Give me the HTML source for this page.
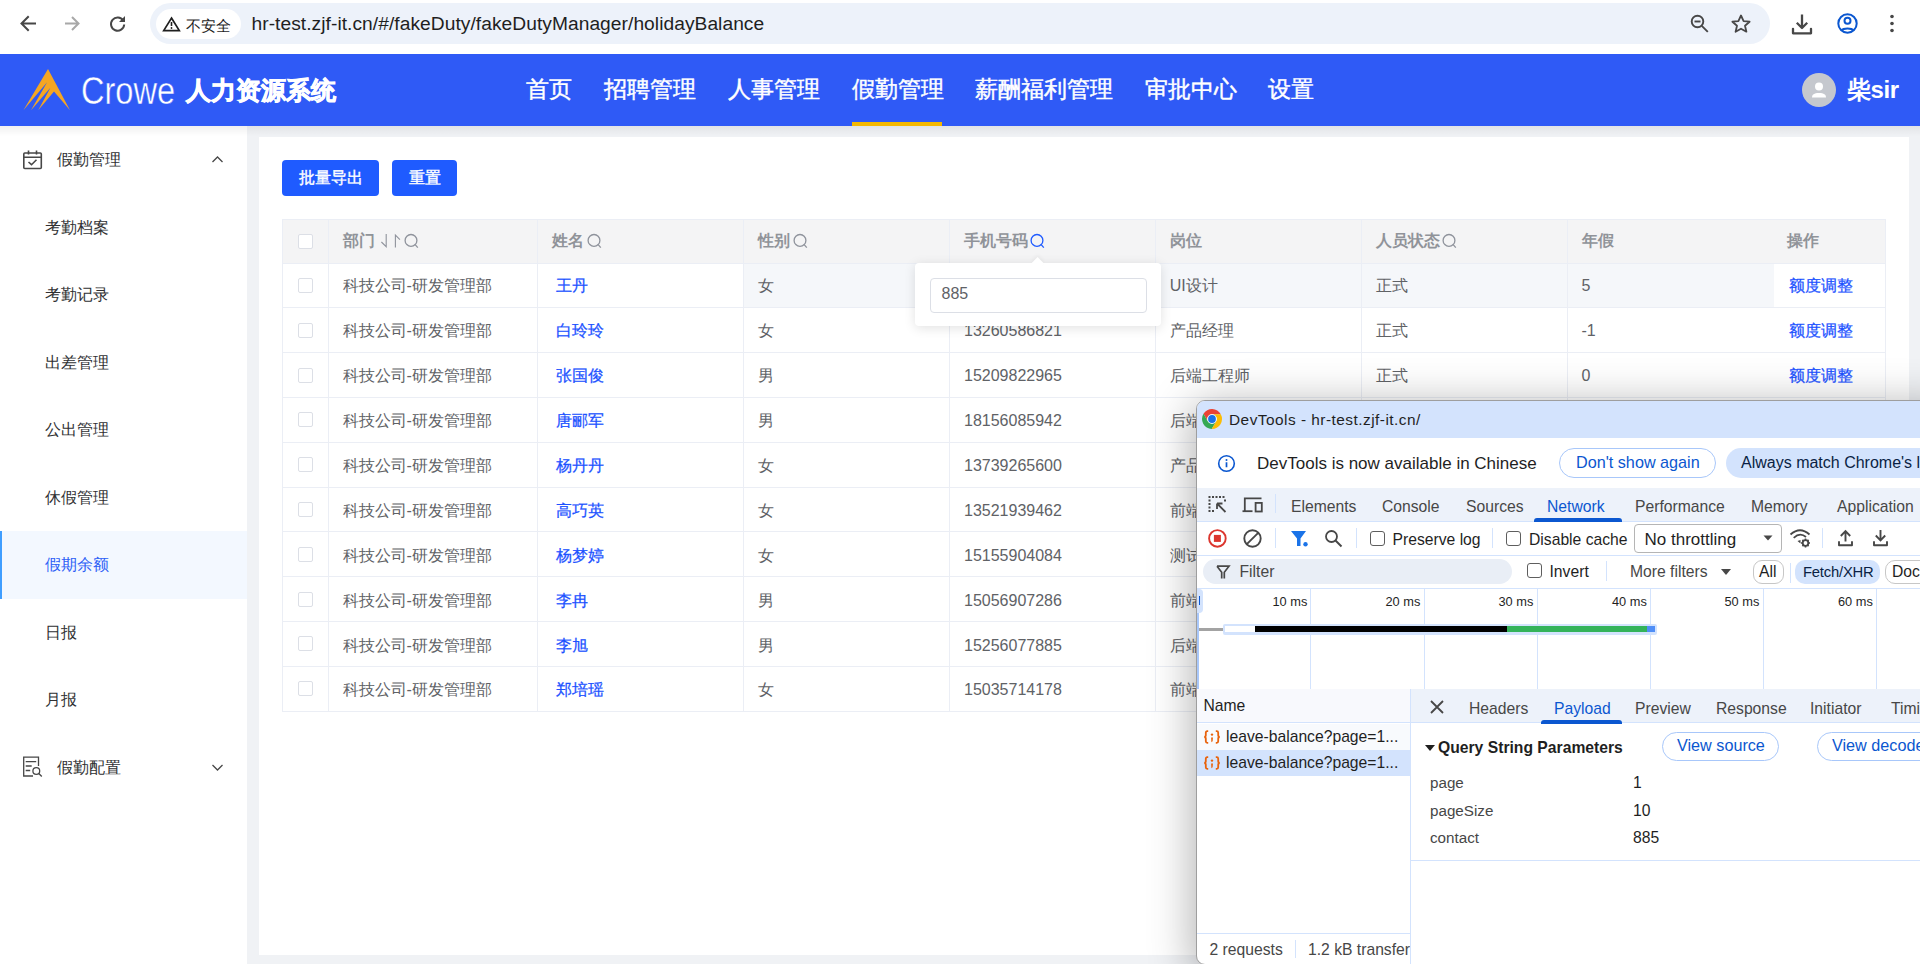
<!DOCTYPE html>
<html><head><meta charset="utf-8">
<style>
*{box-sizing:border-box;margin:0;padding:0}
html,body{width:1920px;height:964px;overflow:hidden;background:#f0f2f5;font-family:"Liberation Sans",sans-serif;position:relative}
.a{position:absolute;white-space:nowrap}
/* chrome toolbar */
#tb{position:absolute;left:0;top:0;width:1920px;height:54px;background:#fff}
#omni{position:absolute;left:150px;top:3px;width:1620px;height:41px;border-radius:21px;background:#edf2fa}
#chip{position:absolute;left:156px;top:9px;width:85px;height:30px;border-radius:15px;background:#fff}
/* header */
#hd{position:absolute;left:0;top:54px;width:1920px;height:72px;background:#2f5af6}
.nav{position:absolute;top:54px;height:72px;line-height:70px;color:#fff;font-size:23px;-webkit-text-stroke:.45px #fff;white-space:nowrap}
/* sidebar */
#sb{position:absolute;left:0;top:126px;width:247px;height:838px;background:#fff}
.si{position:absolute;left:45px;font-size:16px;color:#303133;white-space:nowrap;line-height:20px}
/* card */
#card{position:absolute;left:259px;top:137px;width:1650px;height:818px;background:#fff}
.btn{position:absolute;top:160px;height:36px;border-radius:4px;background:#1f5bff;color:#fff;font-size:16px;line-height:36px;text-align:center;-webkit-text-stroke:.4px #fff}
/* table */
#tbl{position:absolute;left:282px;top:219px;width:1604px;height:492px;border:1px solid #ebeef5;border-right:none;border-bottom:none}
.th{position:absolute;top:219px;height:45px;background:#f4f4f5;border-bottom:1px solid #ebeef5}
.tr{position:absolute;left:282px;width:1604px;height:45px;border-bottom:1px solid #ebeef5}
.vl{position:absolute;top:219px;width:1px;height:492px;background:#ebeef5}
.ht{position:absolute;top:231px;font-size:16px;font-weight:700;color:#909399;line-height:20px;white-space:nowrap}
.td{position:absolute;font-size:16px;color:#606266;line-height:20px;white-space:nowrap}
.lk{color:#1c52ff;-webkit-text-stroke:.25px #1c52ff}
.cb{position:absolute;left:298px;width:15px;height:15px;border:1px solid #dcdfe6;border-radius:2px;background:#fff}
/* devtools */
#dt{position:absolute;left:1197px;top:400px;width:740px;height:563px;background:#fff;border:1px solid #a9b3c4;border-radius:8px;overflow:hidden;box-shadow:-4px 0 10px rgba(0,0,0,.18)}
.dtx{position:absolute;white-space:nowrap;font-size:15.7px;line-height:18px;color:#474747}
</style></head><body>
<!-- ============ CHROME TOOLBAR ============ -->
<div id="tb"></div>
<svg class="a" style="left:0;top:0" width="150" height="54" viewBox="0 0 150 54">
  <g fill="none" stroke="#474747" stroke-width="2" stroke-linecap="square">
    <path d="M35 23.5H22M28 17l-6.5 6.5L28 30"/>
  </g>
  <g fill="none" stroke="#a8a8a8" stroke-width="2">
    <path d="M65 23.5h13M72 17l6.5 6.5L72 30"/>
  </g>
  <g fill="none" stroke="#474747" stroke-width="2">
    <path d="M123.2 20.6A6.6 6.6 0 1 0 124.2 24.5"/>
  </g>
  <path d="M125 16v6h-6z" fill="#474747"/>
</svg>
<div id="omni"></div>
<div id="chip"></div>
<svg class="a" style="left:162px;top:15px" width="19" height="17" viewBox="0 0 19 17"><path d="M9.5 3L17.3 15.6H1.7Z" fill="none" stroke="#1f1f1f" stroke-width="1.7" stroke-linejoin="miter"/><path d="M9.5 7v4" stroke="#1f1f1f" stroke-width="1.6"/><circle cx="9.5" cy="13" r=".9" fill="#1f1f1f"/></svg>
<div class="a" style="left:186px;top:15.5px;font-size:15px;line-height:20px;color:#1f1f1f">不安全</div>
<div class="a" style="left:251.5px;top:12.3px;font-size:19.2px;letter-spacing:.05px;line-height:24px;color:#1f1f1f">hr-test.zjf-it.cn/#/fakeDuty/fakeDutyManager/holidayBalance</div>
<svg class="a" style="left:1686px;top:10px" width="80" height="30" viewBox="0 0 80 30">
  <g fill="none" stroke="#474747" stroke-width="1.9"><circle cx="11.5" cy="11.5" r="5.8"/><path d="M15.8 15.8l6 6"/><path d="M8.5 11.5h6"/></g>
  <path d="M55 5.5l2.6 5.6 6 .6-4.6 4 1.4 6L55 18.7l-5.4 3 1.4-6-4.6-4 6-.6z" fill="none" stroke="#474747" stroke-width="1.8" stroke-linejoin="round"/>
</svg>
<svg class="a" style="left:1780px;top:8px" width="130" height="34" viewBox="0 0 130 34">
  <g fill="none" stroke="#474747" stroke-width="2.3" stroke-linejoin="round"><path d="M22 6.5V20M16.8 14.8L22 20L27.2 14.8"/><path d="M13 20.8V25.3H31V20.8" stroke-linecap="round"/></g>
  <g fill="none" stroke="#0b57d0" stroke-width="2"><circle cx="67.5" cy="15.5" r="9.2"/><circle cx="67.5" cy="12.8" r="3"/><path d="M61.5 22.5c2-2.6 10-2.6 12 0"/></g>
  <g fill="#474747"><circle cx="112" cy="8.5" r="1.8"/><circle cx="112" cy="15.5" r="1.8"/><circle cx="112" cy="22.5" r="1.8"/></g>
</svg>

<!-- ============ HEADER ============ -->
<div id="hd"></div>
<svg class="a" style="left:18px;top:64px" width="60" height="52" viewBox="18 64 60 52"><path d="M48 69 L70 110.3 L54 91.5 L38.2 110.3 L50.4 87.7 L31 110.3 L47.1 82.3 L23.4 110.3 Z" fill="#f5a623"/></svg>
<div class="a" style="left:80.5px;top:68px;font-size:38.5px;line-height:46px;color:#fff;transform:scaleX(0.846);transform-origin:0 0;-webkit-text-stroke:.45px #2f5af6">Crowe</div>
<div class="a" style="left:186px;top:75px;font-size:25px;line-height:30px;color:#fff;font-weight:900;-webkit-text-stroke:.8px #fff">人力资源系统</div>
<div class="nav" style="left:526px">首页</div>
<div class="nav" style="left:604px">招聘管理</div>
<div class="nav" style="left:728px">人事管理</div>
<div class="nav" style="left:852px">假勤管理</div>
<div class="a" style="left:852px;top:122px;width:90px;height:4px;background:#f5b800"></div>
<div class="nav" style="left:975px">薪酬福利管理</div>
<div class="nav" style="left:1145px">审批中心</div>
<div class="nav" style="left:1268px">设置</div>
<svg class="a" style="left:1802px;top:73px" width="34" height="34" viewBox="0 0 34 34"><circle cx="17" cy="17" r="17" fill="#c5c8ce"/><circle cx="17" cy="13.5" r="4" fill="#fff"/><path d="M10 24.5c0-3 2-4.5 7-4.5s7 1.5 7 4.5z" fill="#fff"/></svg>
<div class="a" style="left:1847px;top:75px;font-size:24px;line-height:30px;color:#fff;font-weight:700;letter-spacing:-.4px">柴sir</div>

<!-- ============ SIDEBAR ============ -->
<div id="sb"></div>
<div class="a" style="left:0;top:126px;width:1920px;height:10px;background:linear-gradient(rgba(0,0,0,.06),rgba(0,0,0,0))"></div>
<svg class="a" style="left:22px;top:149px" width="22" height="22" viewBox="0 0 22 22"><g fill="none" stroke="#474747" stroke-width="1.6"><rect x="1.8" y="4" width="17.5" height="15.5" rx="1"/><path d="M2 8.3h17M6.5 1.5v4M14.5 1.5v4M6.5 13l3 2.7 5-5"/></g></svg>
<div class="si" style="left:57px;top:150.2px">假勤管理</div>
<svg class="a" style="left:211px;top:155px" width="13" height="9" viewBox="0 0 13 9"><path d="M1.5 7l5-5 5 5" fill="none" stroke="#474747" stroke-width="1.3"/></svg>
<div class="si" style="top:218.2px">考勤档案</div>
<div class="si" style="top:285.2px">考勤记录</div>
<div class="si" style="top:353.2px">出差管理</div>
<div class="si" style="top:420.2px">公出管理</div>
<div class="si" style="top:488.2px">休假管理</div>
<div class="a" style="left:0;top:531px;width:247px;height:68px;background:#f3f8ff;border-left:2px solid #409eff"></div>
<div class="si" style="top:555.2px;color:#2c5ff6">假期余额</div>
<div class="si" style="top:623.2px">日报</div>
<div class="si" style="top:690.2px">月报</div>
<svg class="a" style="left:22px;top:755px" width="22" height="24" viewBox="0 0 22 24"><g fill="none" stroke="#474747" stroke-width="1.3"><path d="M16.5 11V2.2H1.7V21H11"/><path d="M3.7 6.6h10.5M3.7 11h6M3.7 15.5h4.5"/><circle cx="14.3" cy="16" r="3.4"/><path d="M16.8 18.5l3 3"/></g></svg>
<div class="si" style="left:57px;top:758.2px">假勤配置</div>
<svg class="a" style="left:211px;top:763px" width="13" height="9" viewBox="0 0 13 9"><path d="M1.5 2l5 5 5-5" fill="none" stroke="#474747" stroke-width="1.3"/></svg>

<!-- ============ CARD ============ -->
<div id="card"></div>
<div class="btn" style="left:282px;width:97px">批量导出</div>
<div class="btn" style="left:392px;width:65px">重置</div>
<div class="a" style="left:282px;top:219.2px;width:1604px;height:44.0px;background:#f4f4f5"></div>
<div class="a" style="left:743.4px;top:263.2px;width:1030.1999999999998px;height:44.78px;background:#f5f7fa"></div>
<div class="a" style="left:282px;top:262.70px;width:1604px;height:1px;background:#ebeef5"></div>
<div class="a" style="left:282px;top:307.48px;width:1604px;height:1px;background:#ebeef5"></div>
<div class="a" style="left:282px;top:352.26px;width:1604px;height:1px;background:#ebeef5"></div>
<div class="a" style="left:282px;top:397.04px;width:1604px;height:1px;background:#ebeef5"></div>
<div class="a" style="left:282px;top:441.82px;width:1604px;height:1px;background:#ebeef5"></div>
<div class="a" style="left:282px;top:486.60px;width:1604px;height:1px;background:#ebeef5"></div>
<div class="a" style="left:282px;top:531.38px;width:1604px;height:1px;background:#ebeef5"></div>
<div class="a" style="left:282px;top:576.16px;width:1604px;height:1px;background:#ebeef5"></div>
<div class="a" style="left:282px;top:620.94px;width:1604px;height:1px;background:#ebeef5"></div>
<div class="a" style="left:282px;top:665.72px;width:1604px;height:1px;background:#ebeef5"></div>
<div class="a" style="left:282px;top:710.50px;width:1604px;height:1px;background:#ebeef5"></div>
<div class="a" style="left:282px;top:218.7px;width:1604px;height:1px;background:#ebeef5"></div>
<div class="a" style="left:281.5px;top:219.2px;width:1px;height:491.8px;background:#ebeef5"></div>
<div class="a" style="left:327.5px;top:219.2px;width:1px;height:491.8px;background:#ebeef5"></div>
<div class="a" style="left:537.0px;top:219.2px;width:1px;height:491.8px;background:#ebeef5"></div>
<div class="a" style="left:742.9px;top:219.2px;width:1px;height:491.8px;background:#ebeef5"></div>
<div class="a" style="left:948.7px;top:219.2px;width:1px;height:491.8px;background:#ebeef5"></div>
<div class="a" style="left:1154.8px;top:219.2px;width:1px;height:491.8px;background:#ebeef5"></div>
<div class="a" style="left:1360.9px;top:219.2px;width:1px;height:491.8px;background:#ebeef5"></div>
<div class="a" style="left:1567.0px;top:219.2px;width:1px;height:491.8px;background:#ebeef5"></div>
<div class="a" style="left:1885.0px;top:219.2px;width:1px;height:491.8px;background:#ebeef5"></div>
<div class="cb" style="top:233.5px"></div>
<div class="ht" style="left:342.5px">部门</div>
<svg class="a" style="left:380px;top:233px" width="24" height="16" viewBox="380 233 24 16"><g fill="none" stroke="#8f939c" stroke-width="1.1"><path d="M386.2 234v12.6L381.4 242"/><path d="M395.4 247.6V235l4.5 4.6"/></g></svg>
<svg class="a" style="left:404.3px;top:233px" width="16" height="16" viewBox="0 0 16 16"><circle cx="7" cy="7.4" r="5.9" fill="none" stroke="#8f939c" stroke-width="1.3"/><path d="M11.2 11.6l2.6 3" stroke="#8f939c" stroke-width="1.3"/></svg>
<div class="ht" style="left:552px">姓名</div>
<svg class="a" style="left:587px;top:233px" width="16" height="16" viewBox="0 0 16 16"><circle cx="7" cy="7.4" r="5.9" fill="none" stroke="#8f939c" stroke-width="1.3"/><path d="M11.2 11.6l2.6 3" stroke="#8f939c" stroke-width="1.3"/></svg>
<div class="ht" style="left:758px">性别</div>
<svg class="a" style="left:793px;top:233px" width="16" height="16" viewBox="0 0 16 16"><circle cx="7" cy="7.4" r="5.9" fill="none" stroke="#8f939c" stroke-width="1.3"/><path d="M11.2 11.6l2.6 3" stroke="#8f939c" stroke-width="1.3"/></svg>
<div class="ht" style="left:964px">手机号码</div>
<svg class="a" style="left:1030px;top:233px" width="16" height="16" viewBox="0 0 16 16"><circle cx="7" cy="7.4" r="5.9" fill="none" stroke="#1f5bff" stroke-width="1.3"/><path d="M11.2 11.6l2.6 3" stroke="#1f5bff" stroke-width="1.3"/></svg>
<div class="ht" style="left:1169.8px">岗位</div>
<div class="ht" style="left:1375.8px">人员状态</div>
<svg class="a" style="left:1442px;top:233px" width="16" height="16" viewBox="0 0 16 16"><circle cx="7" cy="7.4" r="5.9" fill="none" stroke="#8f939c" stroke-width="1.3"/><path d="M11.2 11.6l2.6 3" stroke="#8f939c" stroke-width="1.3"/></svg>
<div class="ht" style="left:1581.5px">年假</div>
<div class="ht" style="left:1787px">操作</div>
<div class="cb" style="top:278.09px"></div>
<div class="td" style="left:342.5px;top:276.40px">科技公司-研发管理部</div>
<div class="td lk" style="left:555.6px;top:276.40px">王丹</div>
<div class="td" style="left:758px;top:276.40px">女</div>
<div class="td" style="left:964px;top:276.40px">13000000000</div>
<div class="td" style="left:1169.8px;top:276.40px">UI设计</div>
<div class="td" style="left:1375.8px;top:276.40px">正式</div>
<div class="td" style="left:1581.5px;top:276.40px">5</div>
<div class="td lk" style="left:1789.3px;top:276.40px">额度调整</div>
<div class="cb" style="top:322.87px"></div>
<div class="td" style="left:342.5px;top:321.29px">科技公司-研发管理部</div>
<div class="td lk" style="left:555.6px;top:321.29px">白玲玲</div>
<div class="td" style="left:758px;top:321.29px">女</div>
<div class="td" style="left:964px;top:321.29px">13260586821</div>
<div class="td" style="left:1169.8px;top:321.29px">产品经理</div>
<div class="td" style="left:1375.8px;top:321.29px">正式</div>
<div class="td" style="left:1581.5px;top:321.29px">-1</div>
<div class="td lk" style="left:1789.3px;top:321.29px">额度调整</div>
<div class="cb" style="top:367.65px"></div>
<div class="td" style="left:342.5px;top:366.18px">科技公司-研发管理部</div>
<div class="td lk" style="left:555.6px;top:366.18px">张国俊</div>
<div class="td" style="left:758px;top:366.18px">男</div>
<div class="td" style="left:964px;top:366.18px">15209822965</div>
<div class="td" style="left:1169.8px;top:366.18px">后端工程师</div>
<div class="td" style="left:1375.8px;top:366.18px">正式</div>
<div class="td" style="left:1581.5px;top:366.18px">0</div>
<div class="td lk" style="left:1789.3px;top:366.18px">额度调整</div>
<div class="cb" style="top:412.43px"></div>
<div class="td" style="left:342.5px;top:411.07px">科技公司-研发管理部</div>
<div class="td lk" style="left:555.6px;top:411.07px">唐郦军</div>
<div class="td" style="left:758px;top:411.07px">男</div>
<div class="td" style="left:964px;top:411.07px">18156085942</div>
<div class="td" style="left:1169.8px;top:411.07px">后端工程师</div>
<div class="td" style="left:1375.8px;top:411.07px">正式</div>
<div class="td" style="left:1581.5px;top:411.07px">0</div>
<div class="td lk" style="left:1789.3px;top:411.07px">额度调整</div>
<div class="cb" style="top:457.21px"></div>
<div class="td" style="left:342.5px;top:455.96px">科技公司-研发管理部</div>
<div class="td lk" style="left:555.6px;top:455.96px">杨丹丹</div>
<div class="td" style="left:758px;top:455.96px">女</div>
<div class="td" style="left:964px;top:455.96px">13739265600</div>
<div class="td" style="left:1169.8px;top:455.96px">产品经理</div>
<div class="td" style="left:1375.8px;top:455.96px">正式</div>
<div class="td" style="left:1581.5px;top:455.96px">0</div>
<div class="td lk" style="left:1789.3px;top:455.96px">额度调整</div>
<div class="cb" style="top:501.99px"></div>
<div class="td" style="left:342.5px;top:500.85px">科技公司-研发管理部</div>
<div class="td lk" style="left:555.6px;top:500.85px">高巧英</div>
<div class="td" style="left:758px;top:500.85px">女</div>
<div class="td" style="left:964px;top:500.85px">13521939462</div>
<div class="td" style="left:1169.8px;top:500.85px">前端工程师</div>
<div class="td" style="left:1375.8px;top:500.85px">正式</div>
<div class="td" style="left:1581.5px;top:500.85px">0</div>
<div class="td lk" style="left:1789.3px;top:500.85px">额度调整</div>
<div class="cb" style="top:546.77px"></div>
<div class="td" style="left:342.5px;top:545.74px">科技公司-研发管理部</div>
<div class="td lk" style="left:555.6px;top:545.74px">杨梦婷</div>
<div class="td" style="left:758px;top:545.74px">女</div>
<div class="td" style="left:964px;top:545.74px">15155904084</div>
<div class="td" style="left:1169.8px;top:545.74px">测试工程师</div>
<div class="td" style="left:1375.8px;top:545.74px">正式</div>
<div class="td" style="left:1581.5px;top:545.74px">0</div>
<div class="td lk" style="left:1789.3px;top:545.74px">额度调整</div>
<div class="cb" style="top:591.55px"></div>
<div class="td" style="left:342.5px;top:590.63px">科技公司-研发管理部</div>
<div class="td lk" style="left:555.6px;top:590.63px">李冉</div>
<div class="td" style="left:758px;top:590.63px">男</div>
<div class="td" style="left:964px;top:590.63px">15056907286</div>
<div class="td" style="left:1169.8px;top:590.63px">前端工程师</div>
<div class="td" style="left:1375.8px;top:590.63px">正式</div>
<div class="td" style="left:1581.5px;top:590.63px">0</div>
<div class="td lk" style="left:1789.3px;top:590.63px">额度调整</div>
<div class="cb" style="top:636.33px"></div>
<div class="td" style="left:342.5px;top:635.52px">科技公司-研发管理部</div>
<div class="td lk" style="left:555.6px;top:635.52px">李旭</div>
<div class="td" style="left:758px;top:635.52px">男</div>
<div class="td" style="left:964px;top:635.52px">15256077885</div>
<div class="td" style="left:1169.8px;top:635.52px">后端工程师</div>
<div class="td" style="left:1375.8px;top:635.52px">正式</div>
<div class="td" style="left:1581.5px;top:635.52px">0</div>
<div class="td lk" style="left:1789.3px;top:635.52px">额度调整</div>
<div class="cb" style="top:681.11px"></div>
<div class="td" style="left:342.5px;top:680.41px">科技公司-研发管理部</div>
<div class="td lk" style="left:555.6px;top:680.41px">郑培瑶</div>
<div class="td" style="left:758px;top:680.41px">女</div>
<div class="td" style="left:964px;top:680.41px">15035714178</div>
<div class="td" style="left:1169.8px;top:680.41px">前端工程师</div>
<div class="td" style="left:1375.8px;top:680.41px">正式</div>
<div class="td" style="left:1581.5px;top:680.41px">0</div>
<div class="td lk" style="left:1789.3px;top:680.41px">额度调整</div>
<div class="a" style="left:915px;top:263px;width:246px;height:63px;background:#fff;border-radius:4px;box-shadow:0 2px 12px rgba(0,0,0,.12)"></div>
<div class="a" style="left:1033px;top:258.9px;width:9.2px;height:9.2px;background:#fff;transform:rotate(45deg);box-shadow:-2px -2px 4px rgba(0,0,0,.04)"></div>
<div class="a" style="left:915px;top:266px;width:246px;height:10px;background:#fff"></div>
<div class="a" style="left:929.5px;top:277.5px;width:217px;height:35px;border:1px solid #dcdfe6;border-radius:4px;background:#fff"></div>
<div class="td" style="left:941.5px;top:284px">885</div>
<!-- ============ DEVTOOLS WINDOW ============ -->
<div id="dtw" class="a" style="left:1196px;top:400px;width:760px;height:564.5px;background:#fff;border:1px solid #9e9e9e;border-radius:9px 9px 9px 9px;overflow:hidden;box-shadow:0 8px 44px 4px rgba(0,0,0,.30)">
<div style="position:relative;left:-1197px;top:-401px;width:1940px;height:1000px">
  <!-- title bar -->
  <div class="a" style="left:1197px;top:400px;width:740px;height:38px;background:#d3e3fd"></div>
  <svg class="a" style="left:1202px;top:409px" width="20" height="20" viewBox="4 4 40 40">
    <path d="M41.6 14.5A20 20 0 0 0 7 13.51L15.77 28.75A9.5 9.5 0 0 1 24 14.5Z" fill="#ea4335"/>
    <path d="M7 13.51A20 20 0 0 0 23.43 43.99L32.23 28.75A9.5 9.5 0 0 1 15.77 28.75Z" fill="#34a853"/>
    <path d="M23.43 43.99A20 20 0 0 0 41.6 14.5L24 14.5A9.5 9.5 0 0 1 32.23 28.75Z" fill="#fbbc04"/>
    <circle cx="24" cy="24" r="9.5" fill="#fff"/>
    <circle cx="24" cy="24" r="7.8" fill="#1a73e8"/>
  </svg>
  <div class="dtx" style="left:1229px;top:410.5px;font-size:15.4px;letter-spacing:.48px;line-height:18px;color:#1f1f1f">DevTools - hr-test.zjf-it.cn/</div>

  <!-- info bar -->
  <svg class="a" style="left:1217px;top:454px" width="19" height="19" viewBox="0 0 19 19"><circle cx="9.5" cy="9.5" r="7.8" fill="none" stroke="#0b57d0" stroke-width="1.6"/><path d="M9.5 8.3v5" stroke="#0b57d0" stroke-width="1.7"/><circle cx="9.5" cy="5.9" r="1" fill="#0b57d0"/></svg>
  <div class="dtx" style="left:1257px;top:454px;font-size:17px;line-height:19px;color:#1f1f1f">DevTools is now available in Chinese</div>
  <div class="a" style="left:1559px;top:448px;width:157px;height:30px;border:1px solid #a8c7fa;border-radius:15px"></div>
  <div class="dtx" style="left:1576px;top:453px;font-size:16.2px;line-height:19px;color:#0b57d0">Don't show again</div>
  <div class="a" style="left:1726px;top:448px;width:260px;height:30px;background:#d3e3fd;border-radius:15px"></div>
  <div class="dtx" style="left:1741px;top:453px;font-size:16px;line-height:19px;color:#0a1f44">Always match Chrome's language</div>

  <!-- tab bar -->
  <div class="a" style="left:1197px;top:488px;width:740px;height:33.5px;background:#edf2fa;border-bottom:1px solid #d3e3fd"></div>
  <svg class="a" style="left:1207px;top:494px" width="60" height="22" viewBox="1207 494 60 22">
    <g fill="#474747">
      <rect x="1208.5" y="496" width="2" height="2"/><rect x="1212" y="496" width="2" height="2"/><rect x="1215.5" y="496" width="2" height="2"/><rect x="1219" y="496" width="2" height="2"/><rect x="1222.5" y="496" width="2" height="2"/>
      <rect x="1208.5" y="499.5" width="2" height="2"/><rect x="1208.5" y="503" width="2" height="2"/><rect x="1208.5" y="506.5" width="2" height="2"/><rect x="1208.5" y="510" width="2" height="2"/>
      <rect x="1212" y="510" width="2" height="2"/><rect x="1224" y="499.5" width="2" height="2"/>
    </g>
    <path d="M1217 503.5 L1225.5 512 M1217 503.5 h5.5 M1217 503.5 v5.5" stroke="#474747" stroke-width="1.8" fill="none"/>
    <g fill="none" stroke="#474747" stroke-width="1.8">
      <path d="M1261.5 498.3 H1244.8 V511.2"/><path d="M1242.5 511.2 H1252.5"/><rect x="1255.6" y="502.9" width="6.2" height="8.6"/>
    </g>
  </svg>
  <div class="a" style="left:1275px;top:494px;width:1px;height:19px;background:#d3e3fd"></div>
  <div class="dtx" style="left:1291px;top:497.5px">Elements</div>
  <div class="dtx" style="left:1382px;top:497.5px">Console</div>
  <div class="dtx" style="left:1466px;top:497.5px">Sources</div>
  <div class="dtx" style="left:1547px;top:497.5px;color:#0b57d0">Network</div>
  <div class="a" style="left:1534px;top:517.5px;width:88px;height:4px;background:#0b57d0;border-radius:3px 3px 0 0"></div>
  <div class="dtx" style="left:1635px;top:497.5px">Performance</div>
  <div class="dtx" style="left:1751px;top:497.5px">Memory</div>
  <div class="dtx" style="left:1837px;top:497.5px">Application</div>

  <!-- toolbar -->
  <div class="a" style="left:1197px;top:554.5px;width:740px;height:1px;background:#d3e3fd"></div>
  <svg class="a" style="left:1205px;top:526px" width="150" height="25" viewBox="1205 526 150 25">
    <circle cx="1217.4" cy="538.4" r="8.3" fill="none" stroke="#dc362e" stroke-width="1.9"/>
    <rect x="1213.9" y="534.9" width="7" height="7" fill="#dc362e"/>
    <circle cx="1252.5" cy="538.5" r="8.2" fill="none" stroke="#474747" stroke-width="1.9"/>
    <path d="M1246.8 544.2 L1258.2 532.8" stroke="#474747" stroke-width="1.9"/>
    <path d="M1291 531 H1306 L1300.5 538.5 V546 H1297 V538.5 Z" fill="#1a73e8"/>
    <circle cx="1305.5" cy="544.3" r="2.2" fill="#1a73e8"/>
    <circle cx="1331.5" cy="536.5" r="5.5" fill="none" stroke="#474747" stroke-width="1.8"/>
    <path d="M1335.5 540.5 L1341.5 546.5" stroke="#474747" stroke-width="1.9"/>
  </svg>
  <div class="a" style="left:1275px;top:528px;width:1px;height:20px;background:#d3e3fd"></div>
  <div class="a" style="left:1356px;top:528px;width:1px;height:20px;background:#d3e3fd"></div>
  <div class="a" style="left:1370px;top:531.3px;width:15px;height:14.5px;border:1.5px solid #5e5e5e;border-radius:3px"></div>
  <div class="dtx" style="left:1392.5px;top:530.5px;color:#1f1f1f">Preserve log</div>
  <div class="a" style="left:1492px;top:528px;width:1px;height:20px;background:#d3e3fd"></div>
  <div class="a" style="left:1506px;top:531.3px;width:15px;height:14.5px;border:1.5px solid #5e5e5e;border-radius:3px"></div>
  <div class="dtx" style="left:1529px;top:530.5px;color:#1f1f1f">Disable cache</div>
  <div class="a" style="left:1633.5px;top:524px;width:148px;height:28.5px;border:1px solid #b5b5b5;border-radius:4px"></div>
  <div class="dtx" style="left:1644.5px;top:530px;font-size:17px;line-height:20px;color:#1f1f1f">No throttling</div>
  <svg class="a" style="left:1762px;top:534px" width="12" height="8" viewBox="0 0 12 8"><path d="M1.5 1.5h9L6 6.5z" fill="#474747"/></svg>
  <svg class="a" style="left:1788px;top:528px" width="105" height="22" viewBox="1788 528 105 22">
    <g fill="none" stroke="#474747" stroke-width="1.8">
      <path d="M1790.5 534.5 Q1800 526 1809.5 534.5"/>
      <path d="M1793.7 537.8 Q1800 532 1806 537"/>
    </g>
    <path d="M1797.5 541 l3 -1 v3.5z" fill="#474747"/>
    <circle cx="1805.5" cy="543" r="2.8" fill="none" stroke="#474747" stroke-width="1.8"/>
    <g stroke="#474747" stroke-width="1.6"><path d="M1805.5 538.5v2M1805.5 545.5v2M1801 543h2M1808 543h2M1802.4 539.9l1.4 1.4M1807.2 544.7l1.4 1.4M1802.4 546.1l1.4-1.4M1807.2 541.3l1.4-1.4"/></g>
    <g fill="none" stroke="#474747" stroke-width="1.9">
      <path d="M1845.5 541.5 V531.2 M1840.8 536 L1845.5 531.2 L1850.2 536"/>
      <path d="M1839 542 V545.3 H1852 V542" stroke-linejoin="round" stroke-linecap="round"/>
      <path d="M1880.5 530 V540.3 M1875.8 535.5 L1880.5 540.3 L1885.2 535.5"/>
      <path d="M1874 542 V545.3 H1887 V542" stroke-linejoin="round" stroke-linecap="round"/>
    </g>
  </svg>
  <div class="a" style="left:1822px;top:528px;width:1px;height:20px;background:#d3e3fd"></div>

  <!-- filter bar -->
  <div class="a" style="left:1197px;top:588px;width:740px;height:1px;background:#d3e3fd"></div>
  <div class="a" style="left:1203px;top:559px;width:308.5px;height:25px;background:#e9eef6;border-radius:12.5px"></div>
  <svg class="a" style="left:1215px;top:564px" width="16" height="16" viewBox="0 0 16 16"><path d="M2 2.2h12L9.3 8.2V14.5M2 2.2L6.7 8.2V14.5" fill="none" stroke="#474747" stroke-width="1.7"/></svg>
  <div class="dtx" style="left:1239.5px;top:562.8px;color:#474747">Filter</div>
  <div class="a" style="left:1527px;top:563.3px;width:15px;height:14.5px;border:1.5px solid #5e5e5e;border-radius:3px"></div>
  <div class="dtx" style="left:1549.5px;top:562.8px;color:#1f1f1f">Invert</div>
  <div class="a" style="left:1606px;top:561px;width:1px;height:20px;background:#d3e3fd"></div>
  <div class="dtx" style="left:1630px;top:562.8px;color:#474747">More filters</div>
  <svg class="a" style="left:1719px;top:567px" width="14" height="10" viewBox="0 0 14 10"><path d="M2 2h10L7 8z" fill="#474747"/></svg>
  <div class="a" style="left:1752.5px;top:560.3px;width:31px;height:23.5px;border:1px solid #c7c7c7;border-radius:9px"></div>
  <div class="dtx" style="left:1759px;top:562.8px;color:#1f1f1f">All</div>
  <div class="a" style="left:1789.5px;top:562.8px;width:1px;height:20px;background:#d3e3fd"></div>
  <div class="a" style="left:1795px;top:560.3px;width:85px;height:23.5px;background:#d3e3fd;border-radius:10px"></div>
  <div class="dtx" style="left:1803px;top:562.8px;color:#0a1f44;letter-spacing:-.2px;font-size:14.8px">Fetch/XHR</div>
  <div class="a" style="left:1885px;top:560.3px;width:60px;height:23.5px;border:1px solid #c7c7c7;border-radius:10px"></div>
  <div class="dtx" style="left:1892px;top:562.8px;color:#1f1f1f">Doc</div>

  <!-- timeline overview -->
  <div class="a" style="left:1197px;top:688.5px;width:740px;height:1px;background:#d3e3fd"></div>
  <div class="a" style="left:1310px;top:589px;width:1px;height:100px;background:#d3e3fd"></div>
  <div class="a" style="left:1423.5px;top:589px;width:1px;height:100px;background:#d3e3fd"></div>
  <div class="a" style="left:1536.5px;top:589px;width:1px;height:100px;background:#d3e3fd"></div>
  <div class="a" style="left:1650px;top:589px;width:1px;height:100px;background:#d3e3fd"></div>
  <div class="a" style="left:1762.5px;top:589px;width:1px;height:100px;background:#d3e3fd"></div>
  <div class="a" style="left:1876px;top:589px;width:1px;height:100px;background:#d3e3fd"></div>
  <div class="dtx" style="left:1272.5px;top:594px;font-size:12.8px;line-height:15px;color:#1f1f1f">10 ms</div>
  <div class="dtx" style="left:1385.5px;top:594px;font-size:12.8px;line-height:15px;color:#1f1f1f">20 ms</div>
  <div class="dtx" style="left:1498.5px;top:594px;font-size:12.8px;line-height:15px;color:#1f1f1f">30 ms</div>
  <div class="dtx" style="left:1612px;top:594px;font-size:12.8px;line-height:15px;color:#1f1f1f">40 ms</div>
  <div class="dtx" style="left:1724.5px;top:594px;font-size:12.8px;line-height:15px;color:#1f1f1f">50 ms</div>
  <div class="dtx" style="left:1838px;top:594px;font-size:12.8px;line-height:15px;color:#1f1f1f">60 ms</div>
  <div class="a" style="left:1197px;top:589px;width:2px;height:100px;background:#a8c7fa"></div><div class="a" style="left:1197px;top:589px;width:6px;height:23.5px;border-radius:0 4px 4px 0;background:#d3e3fd"></div><div class="a" style="left:1198.5px;top:596px;width:1.2px;height:9px;background:#0b57d0"></div>
  <div class="a" style="left:1199px;top:628px;width:24px;height:3px;background:#a3a3a3"></div>
  <div class="a" style="left:1223px;top:623.5px;width:434px;height:11px;background:#d3e3fd;border-radius:2px"></div>
  <div class="a" style="left:1225px;top:625.5px;width:30px;height:6px;background:#fff"></div>
  <div class="a" style="left:1255px;top:625.5px;width:252px;height:6px;background:#000"></div>
  <div class="a" style="left:1507px;top:625.5px;width:139.5px;height:6px;background:#34b35a"></div>
  <div class="a" style="left:1646.5px;top:625.5px;width:8px;height:6px;background:#4f8ef7"></div>

  <!-- split: left name panel -->
  <div class="a" style="left:1197px;top:689px;width:213.5px;height:34px;background:#f8f9fd;border-bottom:1px solid #d3e3fd"></div>
  <div class="dtx" style="left:1203.5px;top:697px;color:#1f1f1f">Name</div>
  <div class="a" style="left:1197px;top:724px;width:213.5px;height:26px;background:#f8fafd"></div><div class="a" style="left:1197px;top:750px;width:213.5px;height:25.7px;background:#d3e3fd"></div>
  <svg class="a" style="left:1203px;top:730px" width="18" height="14" viewBox="0 0 18 14"><g fill="none" stroke="#e8620c" stroke-width="1.8"><path d="M5.2 1.2H4.3Q2.8 1.2 2.8 2.7V5.3Q2.8 7 1.2 7Q2.8 7 2.8 8.7V11.3Q2.8 12.8 4.3 12.8H5.2"/><path d="M12.8 1.2H13.7Q15.2 1.2 15.2 2.7V5.3Q15.2 7 16.8 7Q15.2 7 15.2 8.7V11.3Q15.2 12.8 13.7 12.8H12.8"/></g><circle cx="9" cy="4.6" r="1.2" fill="#e8620c"/><path d="M8.1 7.6h1.9l-.4 3.6-1.2 1z" fill="#e8620c"/></svg><svg class="a" style="left:1203px;top:756px" width="18" height="14" viewBox="0 0 18 14"><g fill="none" stroke="#e8620c" stroke-width="1.8"><path d="M5.2 1.2H4.3Q2.8 1.2 2.8 2.7V5.3Q2.8 7 1.2 7Q2.8 7 2.8 8.7V11.3Q2.8 12.8 4.3 12.8H5.2"/><path d="M12.8 1.2H13.7Q15.2 1.2 15.2 2.7V5.3Q15.2 7 16.8 7Q15.2 7 15.2 8.7V11.3Q15.2 12.8 13.7 12.8H12.8"/></g><circle cx="9" cy="4.6" r="1.2" fill="#e8620c"/><path d="M8.1 7.6h1.9l-.4 3.6-1.2 1z" fill="#e8620c"/></svg>
  <div class="dtx" style="left:1226px;top:728px;color:#1f1f1f">leave-balance?page=1...</div>
  <div class="dtx" style="left:1226px;top:754px;color:#1f1f1f">leave-balance?page=1...</div>
  <div class="a" style="left:1410px;top:689px;width:1px;height:280px;background:#d3e3fd"></div>
  <div class="a" style="left:1197px;top:933px;width:213.5px;height:1px;background:#d3e3fd"></div>
  <div class="dtx" style="left:1209.5px;top:941px;color:#474747">2 requests</div>
  <div class="a" style="left:1295px;top:940px;width:1px;height:18px;background:#d3e3fd"></div>
  <div class="dtx" style="left:1308px;top:941px;color:#474747">1.2 kB transferred</div>
  <div class="a" style="left:1410px;top:689px;width:1px;height:280px;background:#d3e3fd"></div>

  <!-- right detail panel -->
  <div class="a" style="left:1411px;top:689px;width:530px;height:34px;background:#edf2fa;border-bottom:1px solid #d3e3fd"></div>
  <div class="a" style="left:1411px;top:723px;width:530px;height:240px;background:#fff"></div>
  <svg class="a" style="left:1429px;top:699px" width="16" height="16" viewBox="0 0 16 16"><path d="M2 2L14 14M14 2L2 14" stroke="#474747" stroke-width="1.8"/></svg>
  <div class="dtx" style="left:1469px;top:699.5px">Headers</div>
  <div class="dtx" style="left:1554px;top:699.5px;color:#0b57d0">Payload</div>
  <div class="a" style="left:1541px;top:719.5px;width:81px;height:4px;background:#0b57d0;border-radius:3px 3px 0 0"></div>
  <div class="dtx" style="left:1635px;top:699.5px">Preview</div>
  <div class="dtx" style="left:1716px;top:699.5px">Response</div>
  <div class="dtx" style="left:1810px;top:699.5px">Initiator</div>
  <div class="dtx" style="left:1891px;top:699.5px">Timing</div>

  <svg class="a" style="left:1424px;top:743px" width="12" height="10" viewBox="0 0 12 10"><path d="M1 2h10L6 8z" fill="#1f1f1f"/></svg>
  <div class="dtx" style="left:1438px;top:738.5px;font-weight:700;color:#1f1f1f">Query String Parameters</div>
  <div class="a" style="left:1661.5px;top:731.5px;width:117px;height:29px;border:1px solid #a8c7fa;border-radius:15px"></div>
  <div class="dtx" style="left:1677px;top:736px;font-size:16.2px;color:#0b57d0">View source</div>
  <div class="a" style="left:1816.5px;top:731.5px;width:160px;height:29px;border:1px solid #a8c7fa;border-radius:15px"></div>
  <div class="dtx" style="left:1832px;top:736px;font-size:16.2px;color:#0b57d0">View decoded</div>
  <div class="dtx" style="left:1430px;top:773.5px;font-size:15.2px;color:#474747">page</div>
  <div class="dtx" style="left:1633px;top:773.5px;color:#1f1f1f">1</div>
  <div class="dtx" style="left:1430px;top:801.5px;font-size:15.2px;color:#474747">pageSize</div>
  <div class="dtx" style="left:1633px;top:801.5px;color:#1f1f1f">10</div>
  <div class="dtx" style="left:1430px;top:828.5px;font-size:15.2px;color:#474747">contact</div>
  <div class="dtx" style="left:1633px;top:828.5px;color:#1f1f1f">885</div>
  <div class="a" style="left:1411px;top:860px;width:530px;height:1px;background:#d3e3fd"></div>
</div>
</div>
</body></html>
